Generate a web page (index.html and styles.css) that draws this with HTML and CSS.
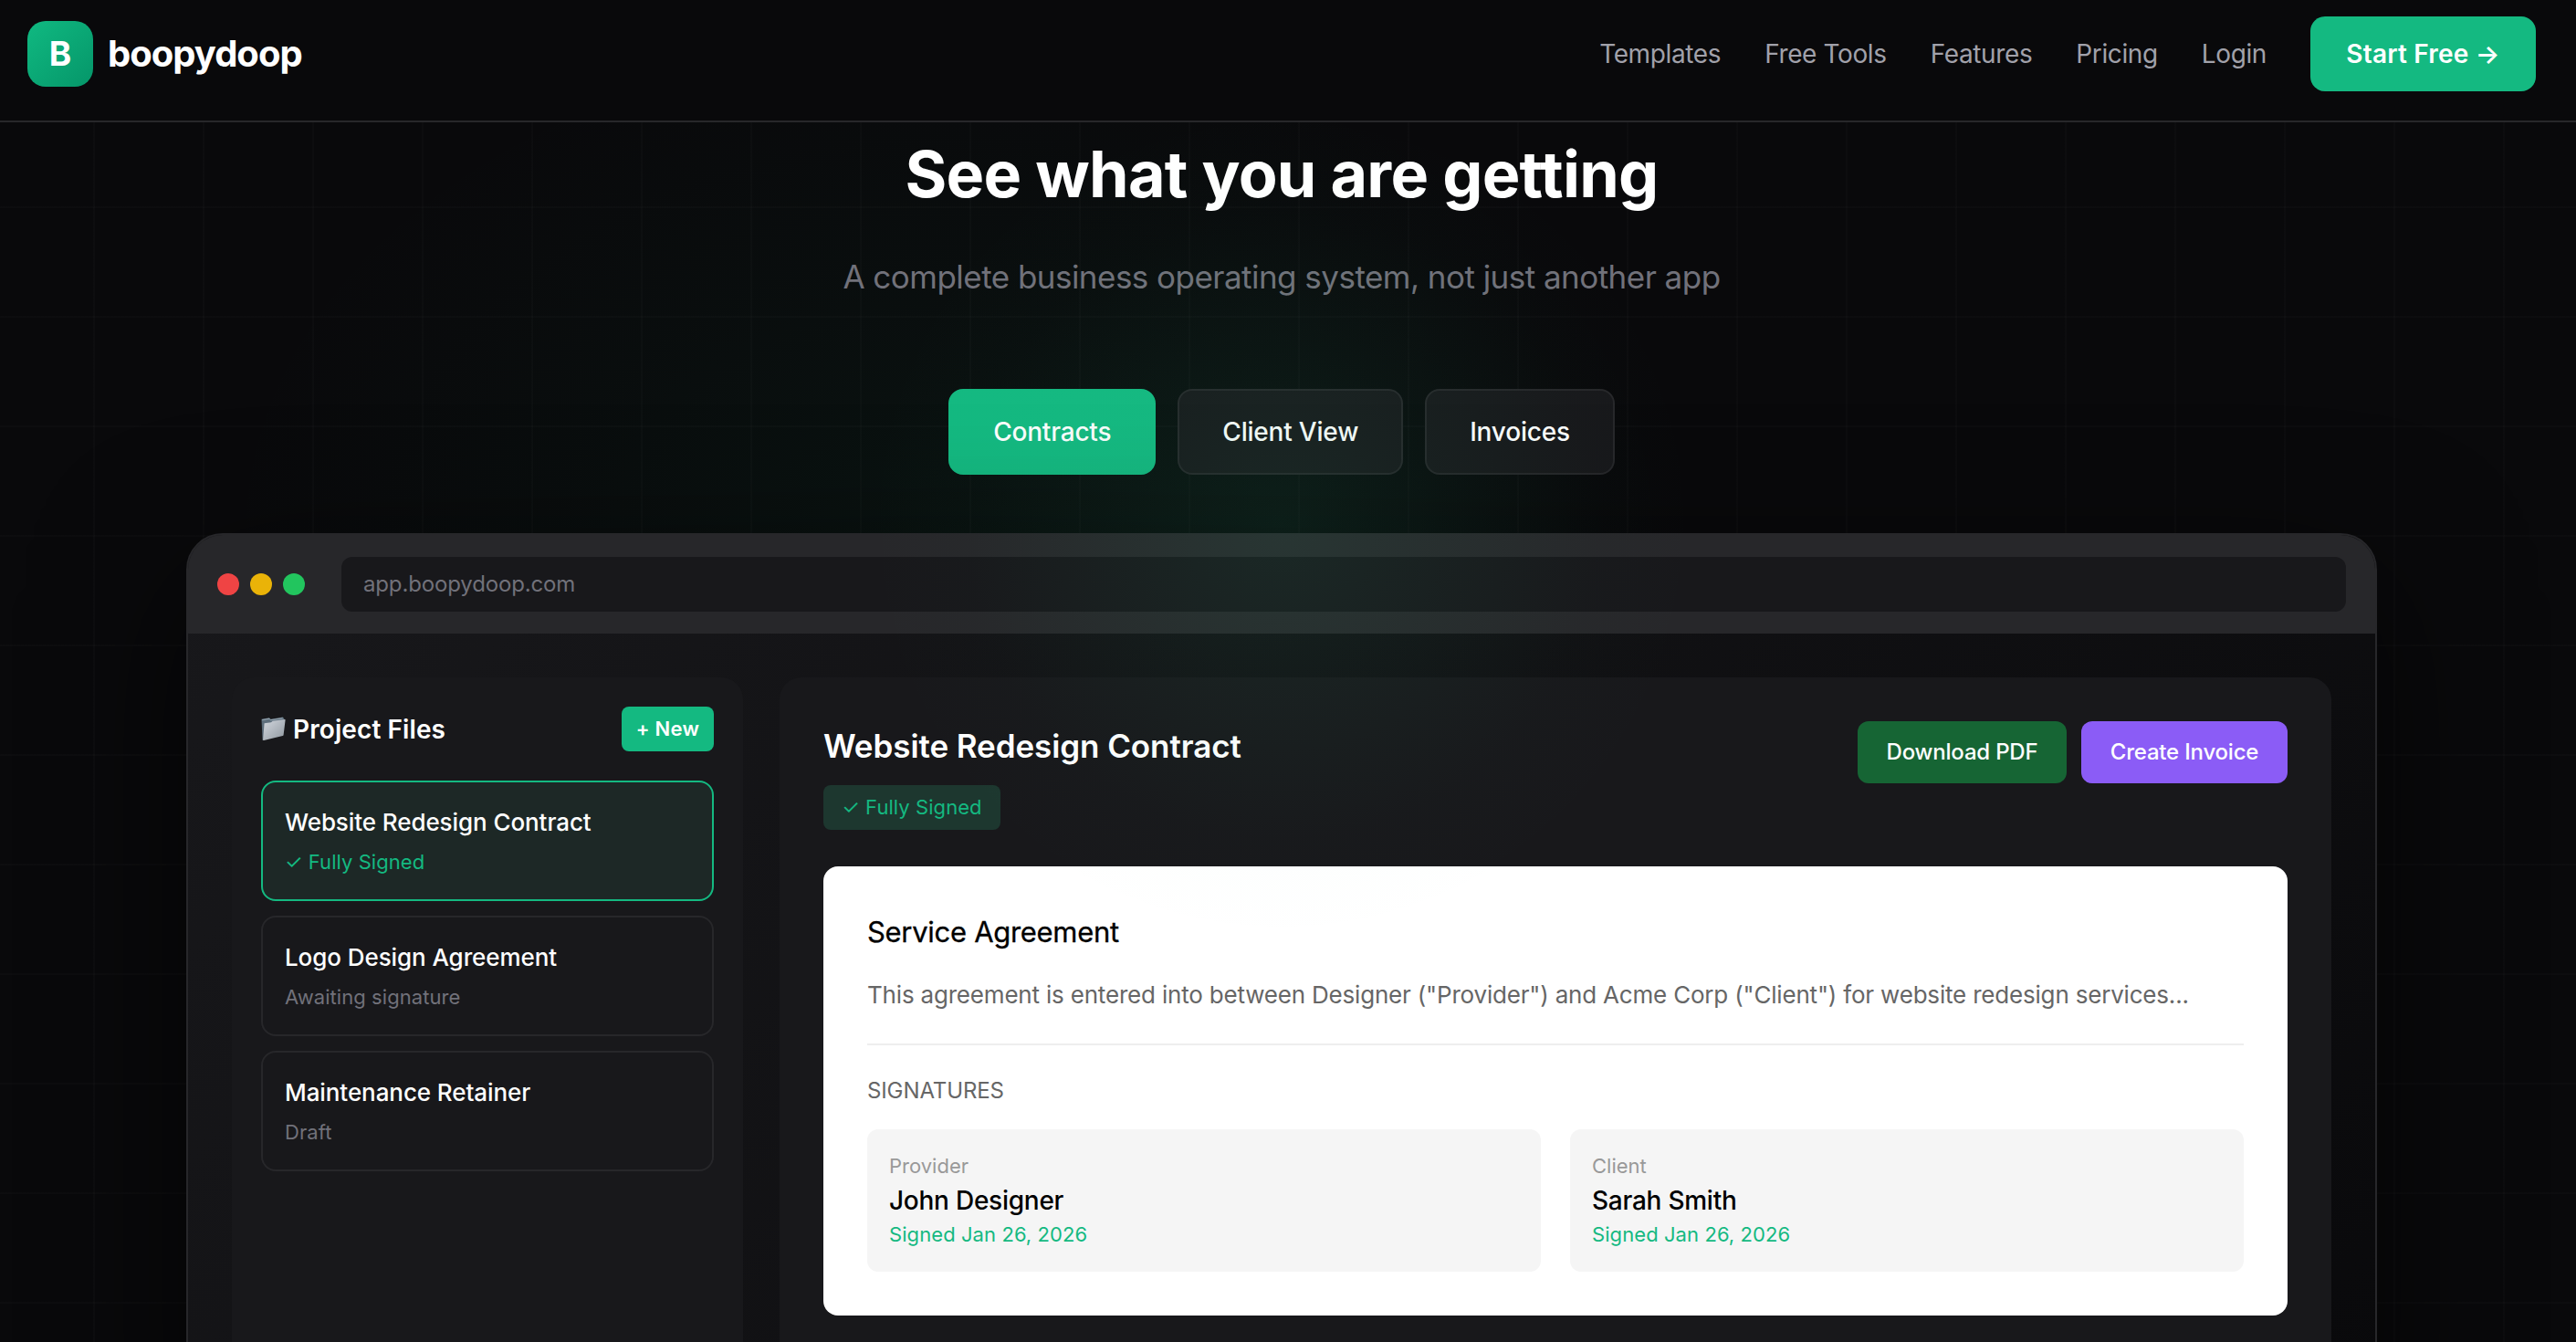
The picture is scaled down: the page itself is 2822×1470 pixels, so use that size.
FILE: index.html
```html
<!DOCTYPE html>
<html lang="en">
<head>
<meta charset="utf-8">
<title>boopydoop</title>
<link rel="stylesheet" href="styles.css">
</head>
<body>
<header class="site-header">
  <div class="header-inner">
    <a class="brand"><span class="brand-mark">B</span><span class="brand-name">boopydoop</span></a>
    <nav class="nav">
      <a class="nav-link">Templates</a>
      <a class="nav-link">Free Tools</a>
      <a class="nav-link">Features</a>
      <a class="nav-link">Pricing</a>
      <a class="nav-link">Login</a>
      <a class="nav-cta">Start Free →</a>
    </nav>
  </div>
</header>

<main class="showcase">
  <div class="backdrop"></div>
  <div class="content">
    <h1 class="title">See what you are getting</h1>
    <p class="subtitle">A complete business operating system, not just another app</p>

    <div class="tabs">
      <button class="tab tab-active">Contracts</button>
      <button class="tab">Client View</button>
      <button class="tab">Invoices</button>
    </div>

    <section class="window">
      <div class="window-bar">
        <div class="dots"><i class="dot red"></i><i class="dot yellow"></i><i class="dot green"></i></div>
        <div class="url">app.boopydoop.com</div>
      </div>
      <div class="window-body">
        <aside class="panel sidebar">
          <div class="sidebar-head">
            <svg class="folder" viewBox="0 0 27 27">
              <defs><linearGradient id="front" x1="0" y1="0" x2="1" y2="1"><stop offset="0" stop-color="#d3d8df"/><stop offset="1" stop-color="#8f979f"/></linearGradient></defs>
              <path d="M.5 2.8 9 1.2l1.6 1.5L24 .6l1.5 2.2L3 25.5 1.6 26z" fill="#5d6e7c"/>
              <path d="M1.2 3.6 9 2.2l1.5 1.5L23.6 1.6" fill="none" stroke="#a3b1bc" stroke-width=".9"/>
              <path d="M3.6 7.2 11 6.2l1.6-1.4L26 2.9q.7 0 .6.8L24.6 20q-.1.8-.9 1L3 26q-1 .2-.9-.8z" fill="url(#front)"/>
            </svg>
            <h2 class="sidebar-title">Project Files</h2>
            <button class="new-btn">+ New</button>
          </div>
          <div class="files">
            <div class="file file-active"><div class="file-name">Website Redesign Contract</div><div class="file-state">✓ Fully Signed</div></div>
            <div class="file"><div class="file-name">Logo Design Agreement</div><div class="file-state">Awaiting signature</div></div>
            <div class="file"><div class="file-name">Maintenance Retainer</div><div class="file-state">Draft</div></div>
          </div>
        </aside>
        <article class="panel document">
          <div class="doc-head">
            <div>
              <h2 class="doc-title">Website Redesign Contract</h2>
              <span class="badge">✓ Fully Signed</span>
            </div>
            <div class="actions">
              <button class="action download">Download PDF</button>
              <button class="action invoice">Create Invoice</button>
            </div>
          </div>
          <div class="paper">
            <h3 class="paper-title">Service Agreement</h3>
            <p class="paper-text">This agreement is entered into between Designer ("Provider") and Acme Corp ("Client") for website redesign services...</p>
            <div class="signatures">
              <div class="sign-label">SIGNATURES</div>
              <div class="sign-grid">
                <div class="sign"><div class="role">Provider</div><div class="person">John Designer</div><div class="signed">Signed Jan 26, 2026</div></div>
                <div class="sign"><div class="role">Client</div><div class="person">Sarah Smith</div><div class="signed">Signed Jan 26, 2026</div></div>
              </div>
            </div>
          </div>
        </article>
      </div>
    </section>
  </div>
  <div class="glow"></div>
</main>
</body>
</html>
```
FILE: styles.css
```css
* { box-sizing: border-box; margin: 0; padding: 0; }

body {
  height: 1470px;
  overflow: hidden;
  background: #09090b;
  color: #fff;
  font-family: Inter, "Liberation Sans", sans-serif;
  line-height: 1.5;
  white-space: nowrap;
}

button { border: 0; color: #fff; font-family: inherit; line-height: inherit; }

/* Header */
.site-header { height: 134px; border-bottom: 2px solid #27272a; background: #09090b; }
.header-inner { width: 2808px; padding: 18px 30px 0; display: flex; justify-content: space-between; align-items: center; }
.brand { display: flex; align-items: center; gap: 16px; }
.brand-mark {
  display: grid; place-items: center; width: 72px; height: 72px; border-radius: 20px;
  background: linear-gradient(135deg, #10b981, #059669);
  font-size: 37px; font-weight: 700;
}
.brand-name { font-size: 40px; font-weight: 700; letter-spacing: -1px; }
.nav { display: flex; align-items: center; gap: 48px; }
.nav-link { color: #a1a1aa; font-size: 28px; letter-spacing: -.38px; }
.nav-cta {
  display: grid; place-items: center; width: 247px; height: 82px; border-radius: 16px;
  background: #14b981; font-size: 28px; font-weight: 600; letter-spacing: .2px;
}

/* Showcase */
.showcase { position: relative; height: 1336px; overflow: hidden; }
.backdrop {
  position: absolute; inset: 0;
  background:
    repeating-linear-gradient(90deg, transparent 0 102px, rgba(255,255,255,.014) 102px 104px, transparent 104px 120px),
    repeating-linear-gradient(180deg, transparent 0 92px, rgba(255,255,255,.014) 92px 94px, transparent 94px 120px),
    radial-gradient(ellipse 800px 560px at 1040px 450px, rgba(20,175,110,.06), rgba(20,175,110,.026) 50%, transparent);
}
.glow {
  position: absolute; left: 924px; top: 0; width: 960px; height: 960px; pointer-events: none;
  background: radial-gradient(circle 460px at 480px 440px, rgba(50,180,130,.105), rgba(50,180,130,.055) 40%, rgba(50,180,130,.012) 75%, transparent);
}
.content { position: relative; width: 2808px; padding-top: 17px; display: flex; flex-direction: column; align-items: center; }
.title { font-size: 70px; font-weight: 700; line-height: 80px; letter-spacing: -.75px; }
.subtitle { margin-top: 43px; color: #71717a; font-size: 35px; line-height: 58px; letter-spacing: -.53px; }

.tabs { display: flex; gap: 24px; margin-top: 94px; }
.tab {
  height: 94px; padding: 0 47px; border: 2px solid #27272a; border-radius: 16px;
  background: #18181b; font-size: 28px; font-weight: 500; letter-spacing: -.2px;
}
.tab-active { background: #14b981; border-color: #14b981; }

/* App window */
.window {
  width: 2400px; height: 1000px; margin-top: 64px; overflow: hidden;
  border: 2px solid #27272a; border-radius: 40px;
  background: linear-gradient(135deg, #18181b, #09090b);
  box-shadow: 0 50px 160px rgba(0,0,0,.6);
}
.window-bar { display: flex; align-items: center; gap: 40px; height: 108px; padding: 0 32px; background: #27272a; }
.dots { display: flex; gap: 12px; }
.dot { width: 24px; height: 24px; border-radius: 50%; }
.red { background: #ef4444; }
.yellow { background: #eab308; }
.green { background: #22c55e; }
.url {
  flex: 1; padding: 12px 24px; border-radius: 12px; background: #18181b;
  color: #71717a; font-size: 24px; letter-spacing: -.15px;
}
.window-body { display: grid; grid-template-columns: 560px 1fr; gap: 40px; padding: 48px; }
.panel { height: 840px; border-radius: 24px; background: #18181b; }

.sidebar { padding: 32px; }
.sidebar-head { display: flex; align-items: center; height: 49px; margin-bottom: 32px; }
.folder { width: 27px; height: 27px; margin-right: 8px; }
.sidebar-title { flex: 1; font-size: 28px; font-weight: 600; letter-spacing: .1px; }
.new-btn { width: 101px; height: 49px; border-radius: 8px; background: #14b981; font-size: 22px; font-weight: 600; letter-spacing: .3px; }
.files { display: flex; flex-direction: column; gap: 16px; }
.file { padding: 24px; border: 2px solid #27272a; border-radius: 16px; }
.file-name { font-size: 26px; font-weight: 500; letter-spacing: -.08px; }
.file-state { margin-top: 8px; color: #71717a; font-size: 22px; letter-spacing: .06px; }
.file-active { border-color: #14b981; background: #1d2826; }
.file-active .file-state { color: #14b981; }

.document { padding: 48px; }
.doc-head { display: flex; justify-content: space-between; align-items: flex-start; height: 119px; margin-bottom: 40px; }
.doc-title { font-size: 35px; line-height: 54px; font-weight: 600; letter-spacing: -.08px; }
.badge {
  display: block; width: 194px; margin-top: 16px; padding: 8px 0; border-radius: 8px; text-align: center;
  background: #1d372f; color: #14b981; font-size: 22px; letter-spacing: .06px;
}
.actions { display: flex; gap: 16px; }
.action { height: 68px; border-radius: 12px; font-size: 24px; font-weight: 500; letter-spacing: -.2px; }
.download { width: 229px; background: #166534; }
.invoice { width: 226px; background: #8b5cf6; }

.paper { padding: 48px; border-radius: 16px; background: #fff; color: #000; }
.paper-title { font-size: 31px; line-height: 48px; font-weight: 400; letter-spacing: -.3px; -webkit-text-stroke: .3px #000; }
.paper-text { margin-top: 24px; color: #666; font-size: 26px; line-height: 1.6; letter-spacing: -.19px; }
.signatures { margin-top: 32px; padding-top: 32px; border-top: 2px solid #eee; }
.sign-label { margin-bottom: 24px; color: #666; font-size: 24px; letter-spacing: -.11px; }
.sign-grid { display: grid; grid-template-columns: 1fr 1fr; gap: 32px; }
.sign { padding: 24px; border-radius: 12px; background: #f5f5f5; }
.role { color: #999; font-size: 22px; }
.person { font-size: 28px; font-weight: 500; letter-spacing: -.25px; }
.signed { color: #14b981; font-size: 22px; letter-spacing: .08px; }
```
